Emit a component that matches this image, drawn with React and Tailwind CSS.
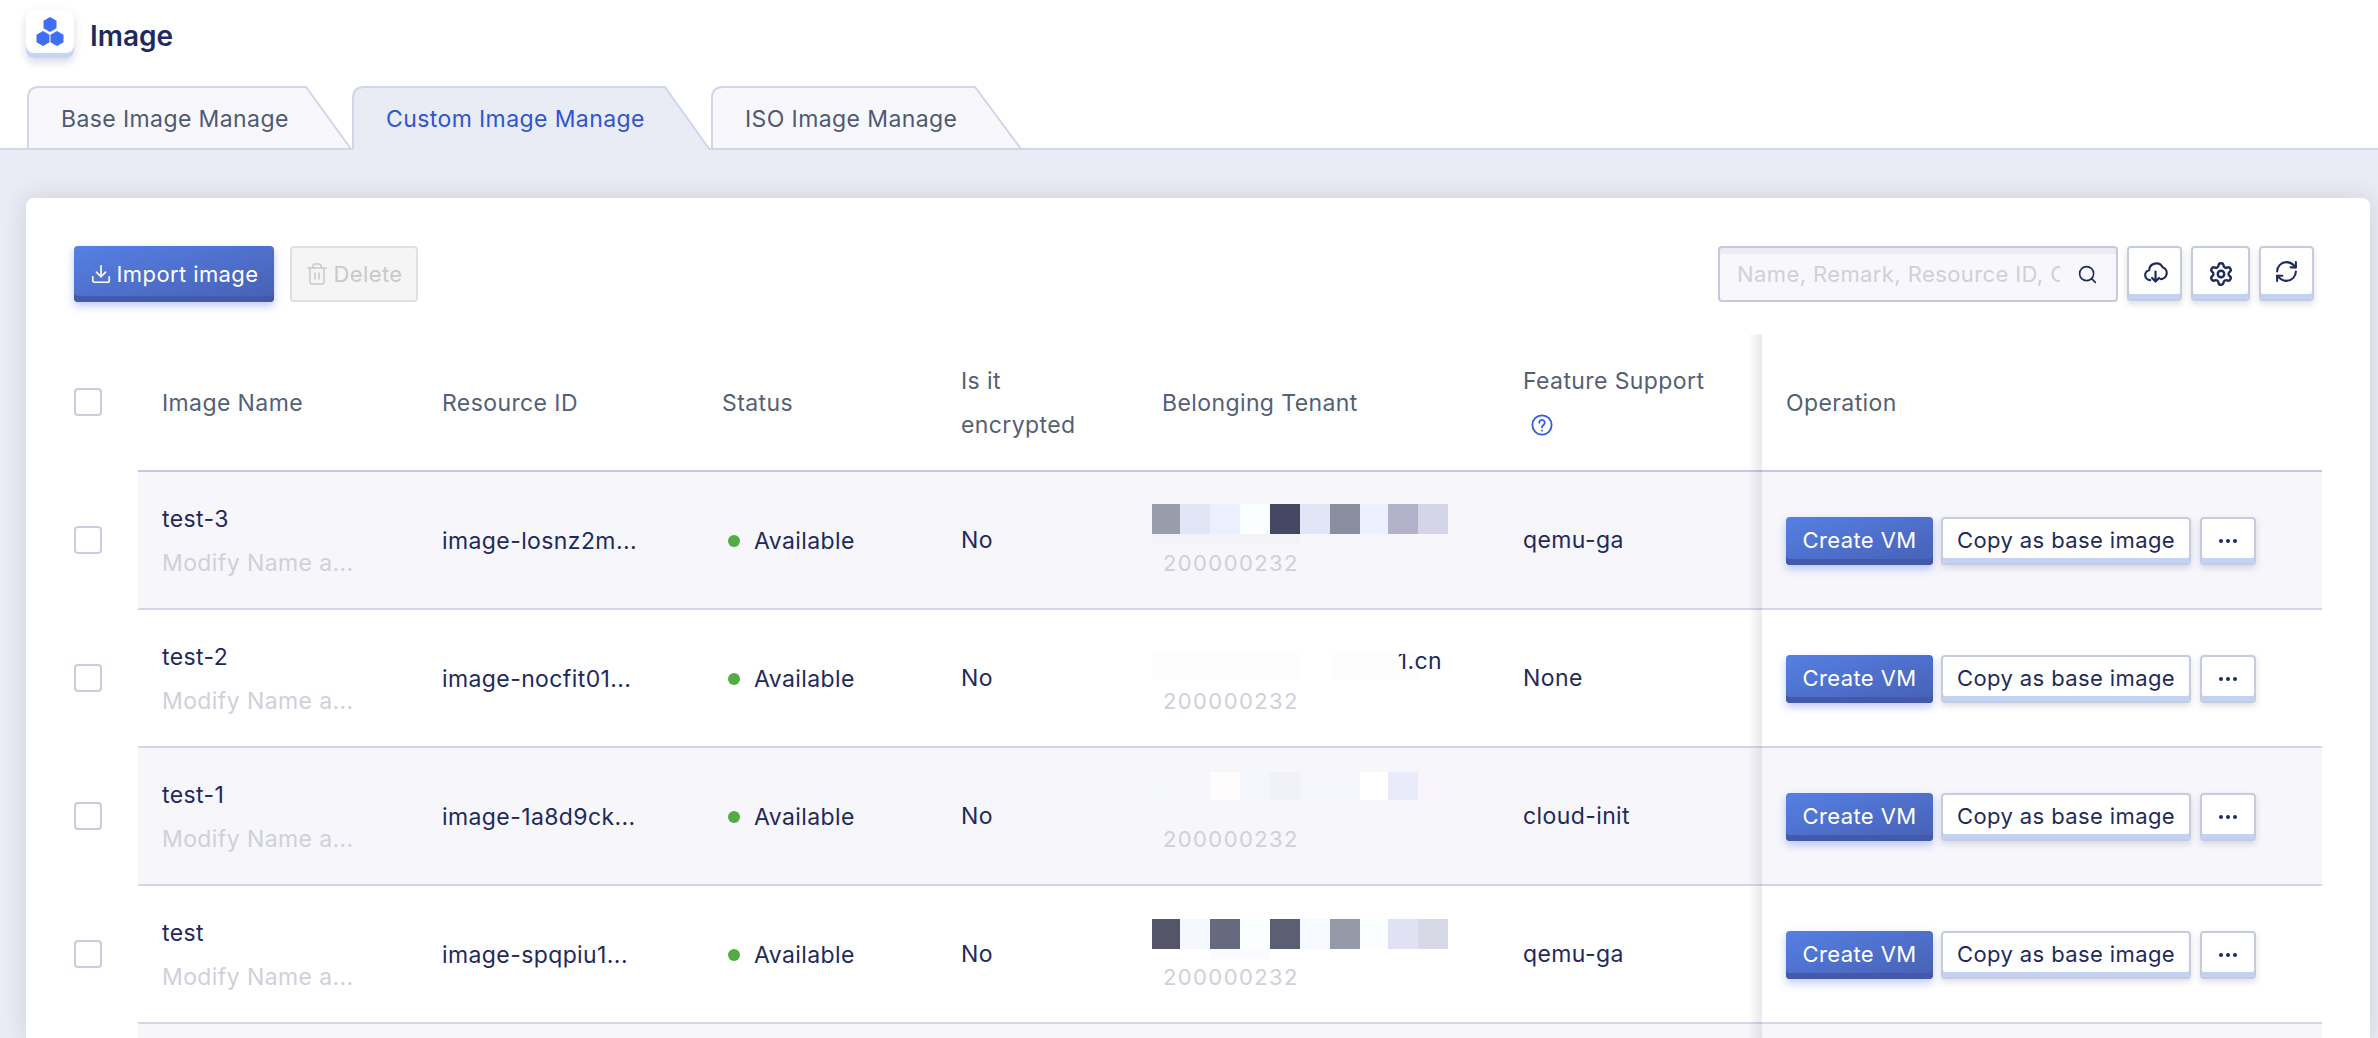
import React from "react";
import { Download, RefreshCw, Search, Settings, Trash2 } from "lucide-react";

const rows = [
  {
    name: "test-3",
    id: "image-losnz2m...",
    feature: "qemu-ga",
    top: 0,
    height: 30,
    strip: { left: 0, width: 148, color: "#f2f2f7" },
    cells: ["#999cab", "#e2e5f5", "#ecf0fe", "#fbfeff", "#444862", "#e2e5f5", "#8b8e9f", "#edf0fe", "#b2b3ca", "#d4d5e6"],
  },
  {
    name: "test-2",
    id: "image-nocfit01...",
    feature: "None",
    top: 12,
    height: 26,
    domain: "1.cn",
    cells: ["#fdfdfe", "#fdfdfe", "#fdfdfe", "#fdfdfe", "#fdfdfe", "#ffffff", "#fdfdfe", "#fdfdfe", "#fdfdfe", "#ffffff"],
  },
  {
    name: "test-1",
    id: "image-1a8d9ck...",
    feature: "cloud-init",
    top: -8,
    height: 28,
    cells: ["#f5f6fa", "#f6f6fb", "#fffcfe", "#f4f6fd", "#f1f1fa", "#f5f5fc", "#f5f5fc", "#ffffff", "#e9ebfb", "#f8f5fd"],
  },
  {
    name: "test",
    id: "image-spqpiu1...",
    feature: "qemu-ga",
    top: 1,
    height: 30,
    strip: { left: 58, width: 60, color: "#fbfbfd" },
    cells: ["#545568", "#f5f9ff", "#676a7f", "#fafeff", "#5b5f74", "#f6f9ff", "#9699a7", "#fafeff", "#e0e1f2", "#d8d9e6"],
  },
];

const cellWidths = ["w-[28px]", "w-[30px]", "w-[30px]", "w-[30px]", "w-[30px]", "w-[30px]", "w-[30px]", "w-[28px]", "w-[30px]", "w-[30px]"];

const gridCols = "grid grid-cols-[280px_280px_239px_201px_361px_263px_560px]";

function Tab({ width, slant, active, children }) {
  const h = 64;
  return (
    <div className="relative flex items-center pl-[34px] h-[64px] pt-[2px] shrink-0" style={{ width }}>
      {/* tab outline with the slanted right edge */}
      <svg className="absolute inset-0" width={width} height={h} viewBox={`0 0 ${width} ${h}`}>
        <path
          d={active ? `M1 ${h} V12 Q1 1 12 1 H${width - slant} L${width - 1} ${h}` : `M1 ${h - 1} V12 Q1 1 12 1 H${width - slant} L${width - 1} ${h - 1} Z`}
          fill={active ? "#e9ebf5" : "#f8f8fc"}
          stroke="#d3d6e8"
          strokeWidth="2"
        />
      </svg>
      <span className={`relative text-[23px] tracking-[0.4px] ${active ? "text-[#2f56d0]" : "text-[#4f5a72]"}`}>{children}</span>
    </div>
  );
}

function LightButton({ className, children }) {
  return (
    <button className={`flex items-center justify-center bg-white border-2 border-[#c6cbe0] rounded-[4px] shadow-[inset_0_-5px_0_#c3d2f2,0_3px_6px_rgba(60,70,110,0.18)] ${className}`}>
      {children}
    </button>
  );
}

function BlueButton({ className, children }) {
  return (
    <button className={`flex items-center justify-center rounded-[4px] text-white bg-gradient-to-br from-[#5580e4] to-[#4760b4] shadow-[inset_0_-6px_0_#4359aa,0_4px_8px_rgba(70,100,230,0.35)] ${className}`}>
      {children}
    </button>
  );
}

function CloudIcon() {
  return (
    <svg width="26" height="26" viewBox="0 0 24 24" fill="none" stroke="#1f2a5c" strokeWidth="2" strokeLinecap="round" strokeLinejoin="round">
      <path d="M7.500 19.500A4.600 4.600 0 0 1 6.600 10.400 6.600 6.600 0 0 1 19 7.600a5.600 5.600 0 0 1-2 10.900" />
      <path d="M12.500 11.500v9M9.300 17.500l3.200 3.200 3.200-3.200" />
    </svg>
  );
}

function Checkbox() {
  return <span className="block w-[28px] h-[28px] bg-white border-2 border-[#c8cde0] rounded-[4px]" />;
}

function TableRow({ row, striped }) {
  const cellBase = `flex items-center pl-6 pt-[1px] ${striped ? "bg-[#f6f6fb]" : "bg-white"}`;
  return (
    <div className="flex h-[138px]">
      <div className="w-16 flex items-center pb-[2px]">
        <Checkbox />
      </div>
      <div className={`${gridCols} border-b-2 border-[#d3d6e8]`}>
        <div className={`${cellBase} flex-col !items-start justify-center`}>
          <div className="leading-[44px] text-[#1f2a5c]">{row.name}</div>
          <div className="leading-[44px] text-[#cfd0da]">Modify Name a...</div>
        </div>
        <div className={`${cellBase} !pt-[3px] text-[#1f2a5c]`}>{row.id}</div>
        <div className={`${cellBase} !pt-[3px] text-[#1f2a5c]`}>
          <span className="w-3 h-3 ml-[6px] mr-[14px] -mt-[2px] rounded-full bg-[#52ac44]" />
          Available
        </div>
        <div className={`${cellBase} text-[#1f2a5c]`}>No</div>
        <div className={`${cellBase} !pl-[14px] flex-col !items-start justify-center`}>
          <div
            className="relative w-[296px]"
            style={{ marginTop: row.top, marginBottom: 44 - row.top - row.height, height: row.height }}
          >
            <div className="relative flex h-full overflow-hidden">
              {row.cells.map((c, i) => (
                <div key={i} className={cellWidths[i]} style={{ background: c }} />
              ))}
              {row.domain && (
                <span className="absolute right-[6px] top-[-8px] leading-[30px] text-[#1f2a5c]">{row.domain}</span>
              )}
            </div>
            {row.strip && (
              <div
                className="absolute top-full h-[10px]"
                style={{ left: row.strip.left, width: row.strip.width, background: row.strip.color }}
              />
            )}
          </div>
          <div className="pl-[11px] text-[#cfd0da] text-[22px] leading-[30px] tracking-[1.4px]">200000232</div>
        </div>
        <div className={`${cellBase} text-[#1f2a5c]`}>{row.feature}</div>
        <div className={`${cellBase} gap-2 text-[22px]`}>
          <BlueButton className="w-[147px] h-[48px]">Create VM</BlueButton>
          <LightButton className="w-[250px] h-[48px] text-[#1f2a5c]">Copy as base image</LightButton>
          <LightButton className="w-[56px] h-[48px] ml-[1px] text-[#1f2a5c]">
            <span className="flex gap-[3px]">
              <i className="block w-[4px] h-[4px] rounded-full bg-[#1f2a5c]" />
              <i className="block w-[4px] h-[4px] rounded-full bg-[#1f2a5c]" />
              <i className="block w-[4px] h-[4px] rounded-full bg-[#1f2a5c]" />
            </span>
          </LightButton>
        </div>
      </div>
    </div>
  );
}

export default function App() {
  return (
    <div className="h-screen overflow-hidden flex flex-col bg-white text-[23px] tracking-[0.4px] [font-family:Inter,sans-serif]">
      {/* Page title */}
      <div className="h-[86px] shrink-0 pl-[26px] pt-[10px] flex items-start gap-[16px]">
        <div className="w-[48px] h-[48px] rounded-[8px] bg-white flex items-center justify-center pb-[4px] shadow-[inset_0_-5px_0_#c5d3f5,0_4px_8px_rgba(60,70,110,0.2)]">
          <svg width="30" height="30" viewBox="0 0 30 30" fill="#3e6ef5">
            <polygon points="15,1 21.5,4.8 21.5,12.2 15,16 8.500,12.200 8.500,4.800" transform="translate(0,-1)" />
            <polygon points="8,14 14.500,17.800 14.500,25.200 8,29 1.500,25.200 1.500,17.800" />
            <polygon points="22,14 28.500,17.800 28.500,25.200 22,29 15.500,25.200 15.500,17.800" />
          </svg>
        </div>
        <h1 className="text-[28px] leading-[52px] font-semibold tracking-normal text-[#1f2a5c]">Image</h1>
      </div>

      {/* Tabs */}
      <div className="h-[64px] shrink-0 flex pl-[27px] border-b-2 border-[#d3d6e8]">
        <Tab width={325} slant={46}>Base Image Manage</Tab>
        <Tab width={359} slant={46} active>Custom Image Manage</Tab>
        <Tab width={311} slant={47}>ISO Image Manage</Tab>
      </div>

      {/* Content */}
      <div className="flex-1 min-h-0 bg-[#e9ebf5] pt-[48px] pl-[26px] pr-2">
        <div className="h-full bg-white rounded-t-[8px] shadow-[0_0_24px_rgba(40,45,80,0.14)] pt-12 px-12 text-[23px]">
          {/* Toolbar */}
          <div className="flex items-start h-[88px] text-[22px]">
            <BlueButton className="w-[200px] h-[56px] gap-[5px]">
              <Download size={22} strokeWidth={1.8} />
              Import image
            </BlueButton>
            <button className="ml-4 w-[128px] h-[56px] flex items-center justify-center gap-[4px] bg-[#f5f5f5] border-2 border-[#e0e0e0] rounded-[4px] text-[#c9c9c9]">
              <Trash2 size={24} strokeWidth={1.5} />
              Delete
            </button>
            <div className="ml-auto w-[400px] h-[56px] flex items-center pl-[17px] pr-[18px] bg-[#f8f8fc] border-2 border-[#c5c9dc] rounded-[4px] shadow-[inset_0_6px_0_#ececf2]">
              <div className="w-[323px] overflow-hidden whitespace-nowrap text-[#cfd0da]">Name, Remark, Resource ID, Operation</div>
              <Search size={21} className="ml-auto text-[#1f2a5c]" strokeWidth={1.8} />
            </div>
            <div className="flex gap-[9px] ml-[9px] mr-2">
              <LightButton className="w-[55px] h-[55px] pb-[4px]"><CloudIcon /></LightButton>
              <LightButton className="w-[59px] h-[55px] pt-[1px]"><Settings size={26} color="#1f2a5c" strokeWidth={2.2} /></LightButton>
              <LightButton className="w-[55px] h-[55px] pb-[4px]"><RefreshCw size={25} color="#1f2a5c" strokeWidth={2} /></LightButton>
            </div>
          </div>

          {/* Table */}
          <div className="relative">
            <div className="flex h-[138px]">
              <div className="w-16 flex items-center pb-[2px]">
                <Checkbox />
              </div>
              <div className={`${gridCols} items-stretch border-b-2 border-[#c6c9dc] text-[#555f75] pt-[1px]`}>
                <div className="flex items-center pl-6 pt-[2px]">Image Name</div>
                <div className="flex items-center pl-6 pt-[2px]">Resource ID</div>
                <div className="flex items-center pl-6 pt-[2px]">Status</div>
                <div className="flex items-center pl-6 leading-[44px]">Is it<br />encrypted</div>
                <div className="flex items-center pl-6 pt-[2px]">Belonging Tenant</div>
                <div className="flex flex-col justify-center pl-6 leading-[44px]">
                  <div>Feature Support</div>
                  <div className="h-[44px] flex items-center pl-2">
                    <svg width="22" height="22" viewBox="0 0 24 24" fill="none" stroke="#2f5fe0" strokeWidth="2" strokeLinecap="round">
                      <circle cx="12" cy="12" r="10.500" />
                      <path d="M9 9.500a3 3 0 1 1 4.600 2.500c-1 .7-1.600 1.300-1.600 2.500" />
                      <path d="M12 18v.1" />
                    </svg>
                  </div>
                </div>
                <div className="flex items-center pl-6 pt-[2px]">Operation</div>
              </div>
            </div>

            {rows.map((row, i) => (
              <TableRow key={row.name} row={row} striped={i % 2 === 0} />
            ))}
            <div className="flex h-[138px]">
              <div className="w-16" />
              <div className="w-[2184px] bg-[#f6f6fb]" />
            </div>

            {/* shadow of the frozen Operation column */}
            <div className="absolute top-0 bottom-0 left-[1674px] w-[14px] bg-gradient-to-r from-[rgba(40,45,80,0)] to-[rgba(40,45,80,0.1)]" />
          </div>
        </div>
      </div>
    </div>
  );
}
